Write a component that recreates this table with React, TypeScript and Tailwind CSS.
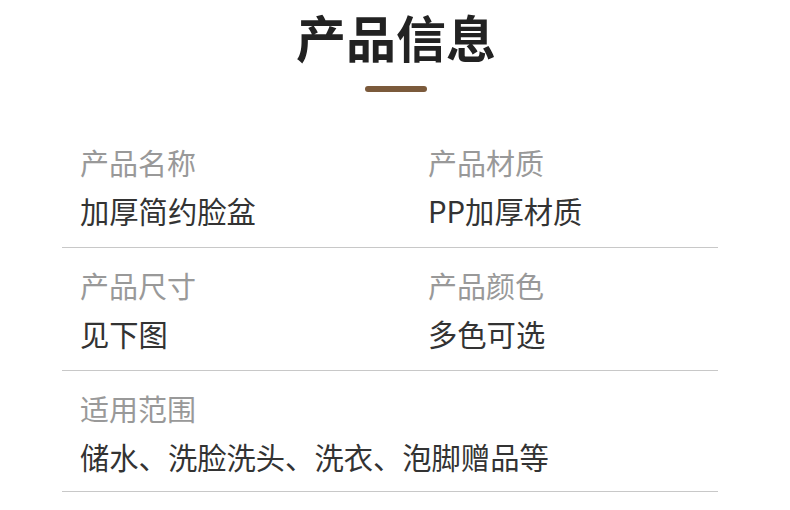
const rows: { label: string; value: string }[][] = [
  [
    { label: "产品名称", value: "加厚简约脸盆" },
    { label: "产品材质", value: "PP加厚材质" },
  ],
  [
    { label: "产品尺寸", value: "见下图" },
    { label: "产品颜色", value: "多色可选" },
  ],
  [{ label: "适用范围", value: "储水、洗脸洗头、洗衣、泡脚赠品等" }],
];

export default function App() {
  return (
    <div
      className="w-[790px] h-[510px] bg-white overflow-hidden"
      style={{ fontFamily: '"Noto Sans CJK SC", "Noto Sans", sans-serif' }}
    >
      <h1 className="text-center text-[50px] font-bold leading-none text-[#222] pt-[11px] pl-[2px]">
        产品信息
      </h1>
      <div className="mt-[25px] ml-[365px] w-[62px] h-[6px] rounded-full bg-[#7b5a3b]" />
      <div className="ml-[62px] w-[656px] mt-[46px]">
        {rows.map((row, i) => (
          <div
            key={i}
            className="grid grid-cols-[348px_1fr] border-b border-[#c8c8c8] pl-[18px] pb-[13px] pt-[13px] first:pt-0 last:pb-[11px]"
          >
            {row.map((cell) => (
              <div key={cell.label} className={row.length === 1 ? "col-span-2" : ""}>
                <div className="text-[29px] leading-[48px] text-[#999]">{cell.label}</div>
                <div className="text-[29.3px] leading-[48px] text-[#333]">{cell.value}</div>
              </div>
            ))}
          </div>
        ))}
      </div>
    </div>
  );
}
